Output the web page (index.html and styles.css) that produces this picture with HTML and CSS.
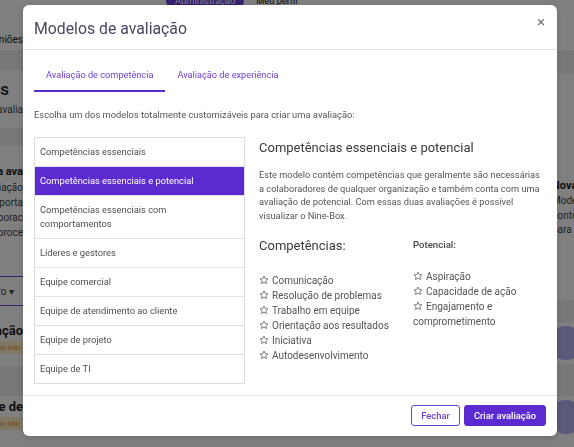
FILE: index.html
```html
<!DOCTYPE html>
<html lang="pt-BR">
<head>
<meta charset="utf-8">
<title>Modelos de avaliação</title>
<link rel="stylesheet" href="styles.css">
</head>
<body>
<div class="page">
  <header class="topbar">
    <div class="navpills">
      <span class="pill">Administração</span>
      <span class="navlink">Meu perfil</span>
    </div>
    <div class="subnav">
      <div class="clip-left"><span class="subnav-item">Reuniões</span></div>
    </div>
  </header>
  <div class="columns">
    <div class="col-left">
      <div class="band"></div>
      <div class="blk blk-title"><div class="clip clip-pad"><span class="big">Avaliações</span></div><div class="clip"><span class="small">Minhas avalia</span></div></div>
      <div class="band"></div>
      <div class="blk blk-card">
        <div class="clip"><span class="bold11">Nova ava</span></div>
        <div class="clip"><span class="small">Modelos de avaliação</span></div>
        <div class="clip"><span class="small">mais importa</span></div>
        <div class="clip"><span class="small">dos colaborac</span></div>
        <div class="clip"><span class="small">o proce</span></div>
      </div>
      <div class="blk blk-select"><div class="clip clip-pad2"><span class="small">Filtro ▾</span></div></div>
      <div class="blk blk-item">
        <div class="clip"><span class="bold13">Avaliação</span></div>
        <div class="clip"><span class="badge">Não inic</span></div>
      </div>
      <div class="band band-tall"></div>
      <div class="blk blk-item">
        <div class="clip"><span class="bold13">Equipe de</span></div>
        <div class="clip"><span class="badge">Não inic</span></div>
      </div>
    </div>
    <div class="col-mid"></div>
    <div class="col-right">
      <div class="rband"></div>
      <div class="rblk rblk-card">
        <span class="bold11">Nova ava</span>
        <span class="small">Modelos de</span>
        <span class="small">pontos</span>
        <span class="small">para se</span>
      </div>
      <div class="rband2"></div>
      <div class="rblk rblk-icon"><span class="circle"></span></div>
      <div class="rband3"></div>
      <div class="rblk rblk-icon"><span class="circle"></span></div>
    </div>
  </div>
</div>

<div class="overlay">
  <div class="modal">
    <div class="modal-header">
      <h1 class="modal-title">Modelos de avaliação</h1>
      <span class="close">×</span>
    </div>
    <div class="modal-body">
      <div class="tabs">
        <span class="tab active">Avaliação de competência</span>
        <span class="tab">Avaliação de experiência</span>
      </div>
      <p class="intro">Escolha um dos modelos totalmente customizáveis para criar uma avaliação:</p>
      <div class="content">
        <ul class="models">
          <li>Competências essenciais</li>
          <li class="selected">Competências essenciais e potencial</li>
          <li>Competências essenciais com comportamentos</li>
          <li>Líderes e gestores</li>
          <li>Equipe comercial</li>
          <li>Equipe de atendimento ao cliente</li>
          <li>Equipe de projeto</li>
          <li>Equipe de TI</li>
        </ul>
        <div class="detail">
          <h2 class="detail-title">Competências essenciais e potencial</h2>
          <p class="desc">Este modelo contém competências que geralmente são necessárias a colaboradores de qualquer organização e também conta com uma avaliação de potencial. Com essas duas avaliações é possível visualizar o Nine-Box.</p>
          <div class="lists">
            <div class="comp">
              <h3 class="comp-title">Competências:</h3>
              <ul class="stars">
                <li><svg class="star" viewBox="0 0 24 24"><polygon points="12 2.5 14.9 8.6 21.5 9.4 16.6 13.9 17.9 20.5 12 17.2 6.1 20.5 7.4 13.9 2.5 9.4 9.1 8.6"/></svg>Comunicação</li>
                <li><svg class="star" viewBox="0 0 24 24"><polygon points="12 2.5 14.9 8.6 21.5 9.4 16.6 13.9 17.9 20.5 12 17.2 6.1 20.5 7.4 13.9 2.5 9.4 9.1 8.6"/></svg>Resolução de problemas</li>
                <li><svg class="star" viewBox="0 0 24 24"><polygon points="12 2.5 14.9 8.6 21.5 9.4 16.6 13.9 17.9 20.5 12 17.2 6.1 20.5 7.4 13.9 2.5 9.4 9.1 8.6"/></svg>Trabalho em equipe</li>
                <li><svg class="star" viewBox="0 0 24 24"><polygon points="12 2.5 14.9 8.6 21.5 9.4 16.6 13.9 17.9 20.5 12 17.2 6.1 20.5 7.4 13.9 2.5 9.4 9.1 8.6"/></svg>Orientação aos resultados</li>
                <li><svg class="star" viewBox="0 0 24 24"><polygon points="12 2.5 14.9 8.6 21.5 9.4 16.6 13.9 17.9 20.5 12 17.2 6.1 20.5 7.4 13.9 2.5 9.4 9.1 8.6"/></svg>Iniciativa</li>
                <li><svg class="star" viewBox="0 0 24 24"><polygon points="12 2.5 14.9 8.6 21.5 9.4 16.6 13.9 17.9 20.5 12 17.2 6.1 20.5 7.4 13.9 2.5 9.4 9.1 8.6"/></svg>Autodesenvolvimento</li>
              </ul>
            </div>
            <div class="pot">
              <h3 class="pot-title">Potencial:</h3>
              <ul class="stars">
                <li><svg class="star" viewBox="0 0 24 24"><polygon points="12 2.5 14.9 8.6 21.5 9.4 16.6 13.9 17.9 20.5 12 17.2 6.1 20.5 7.4 13.9 2.5 9.4 9.1 8.6"/></svg>Aspiração</li>
                <li><svg class="star" viewBox="0 0 24 24"><polygon points="12 2.5 14.9 8.6 21.5 9.4 16.6 13.9 17.9 20.5 12 17.2 6.1 20.5 7.4 13.9 2.5 9.4 9.1 8.6"/></svg>Capacidade de ação</li>
                <li><svg class="star" viewBox="0 0 24 24"><polygon points="12 2.5 14.9 8.6 21.5 9.4 16.6 13.9 17.9 20.5 12 17.2 6.1 20.5 7.4 13.9 2.5 9.4 9.1 8.6"/></svg>Engajamento e comprometimento</li>
              </ul>
            </div>
          </div>
        </div>
      </div>
    </div>
    <div class="modal-footer">
      <button class="btn btn-outline">Fechar</button>
      <button class="btn btn-primary">Criar avaliação</button>
    </div>
  </div>
</div>
</body>
</html>
```
FILE: styles.css
```css
* { box-sizing: border-box; }
html, body { margin: 0; padding: 0; }
body {
  width: 574px;
  height: 447px;
  overflow: hidden;
  font-family: Roboto, "Liberation Sans", sans-serif;
  background: #ffffff;
  color: #333;
}

/* ---------- background page ---------- */
.page { width: 574px; height: 447px; display: flex; flex-direction: column; background: #fff; }
.topbar { height: 52px; display: flex; flex-direction: column; border-bottom: 1px solid #e6e6e6; }
.navpills { display: flex; gap: 12px; padding-left: 166px; margin-top: -9px; height: 18px; align-items: center; }
.pill { background: #6d3fe0; color: #fff; font-size: 9.3px; padding: 3px 9px; border-radius: 10px; }
.navlink { font-size: 9.3px; color: #222; }
.subnav { display: flex; margin-top: 25px; }
.clip-left, .clip { width: 23px; overflow: hidden; display: flex; justify-content: flex-end; white-space: nowrap; }
.clip-pad { padding-right: 14px; }
.clip-pad2 { padding-right: 9px; }
.subnav-item { font-size: 10px; color: #222; }
.columns { flex: 1; display: flex; }
.col-left { width: 23px; display: flex; flex-direction: column; }
.col-mid { flex: 1; }
.col-right { width: 17px; display: flex; flex-direction: column; overflow: hidden; }
.band { height: 18px; background: #eeeeef; flex: none; }
.band-tall { height: 30px; }
.blk { background: #fff; display: flex; flex-direction: column; flex: none; }
.blk-title { height: 58px; padding-top: 9px; gap: 3px; }
.big { font-size: 17px; color: #222; font-weight: 500; line-height: 20px; }
.small { font-size: 10px; color: #444; line-height: 15px; }
.bold11 { font-size: 11px; font-weight: 700; color: #222; line-height: 16px; }
.bold13 { font-size: 13px; font-weight: 700; color: #222; line-height: 17px; }
.blk-card { height: 104px; padding-top: 18px; }
.blk-select { height: 30px; justify-content: center; border-top: 1px solid #6d3fe0; border-bottom: 1px solid #6d3fe0; margin: 26px 0 14px; }
.blk-item { height: 46px; gap: 2px; padding-top: 2px; }
.badge { background: #fff1c9; color: #d98b1a; font-size: 8px; padding: 1px 3px; line-height: 11px; }
.rband { height: 22px; background: #eeeeef; flex: none; }
.rblk { background: #fff; display: flex; flex-direction: column; flex: none; }
.rblk-card { height: 226px; padding-top: 104px; margin-left: -5px; white-space: nowrap; }
.rblk-card .small { line-height: 14.5px; }
.rband2 { height: 22px; background: #eeeeef; flex: none; }
.rblk-icon { height: 42px; justify-content: center; }
.rband3 { height: 32px; background: #eeeeef; flex: none; }
.circle { width: 34px; height: 34px; border-radius: 50%; background: #b6b2f0; margin-left: -8px; }

/* ---------- overlay & modal ---------- */
.overlay {
  position: fixed;
  inset: 0;
  background: rgba(0, 0, 0, 0.5);
  padding: 5px 0 0 23px;
}
.modal {
  width: 534px;
  background: #fff;
  border-radius: 6px;
  display: flex;
  flex-direction: column;
  box-shadow: 0 2px 6px rgba(0,0,0,0.15);
}
.modal-header {
  height: 45px;
  display: flex;
  align-items: center;
  justify-content: space-between;
  padding: 0 12px 0 11px;
  border-bottom: 1px solid #e2e2ea;
}
.modal-title {
  margin: 0;
  font-size: 15.8px;
  font-weight: 400;
  color: #474761;
  padding-top: 2px;
}
.close { font-size: 15px; color: #777; line-height: 1; margin-top: -10px; }

.modal-body { padding: 10px 11px 11px; }
.tabs { display: flex; }
.tab {
  font-size: 9.2px;
  line-height: 14px;
  color: #6b3fd6;
  padding: 8px 12px 8px;
  border-bottom: 2px solid transparent;
}
.tab.active { border-bottom-color: #5b2bd1; }
.intro { margin: 16px 0 15px; font-size: 9.35px; line-height: 14px; color: #555; }

.content { display: flex; gap: 14px; }
.models {
  list-style: none;
  margin: 0;
  padding: 0;
  width: 211px;
  flex: none;
  border: 1px solid #dcdcdc;
}
.models li {
  font-size: 9.3px;
  line-height: 14px;
  color: #4e4e4e;
  padding: 7px 5px;
  border-bottom: 1px solid #e2e2e2;
}
.models li:last-child { border-bottom: none; }
.models li.selected { background: #5b2bd1; color: #fff; }

.detail { flex: 1; }
.detail-title { margin: 2px 0 0; font-size: 13px; font-weight: 400; line-height: 18px; color: #3a3a3a; }
.desc { margin: 11px 0 0; font-size: 9.25px; line-height: 13.6px; color: #555; }
.lists { display: flex; margin-top: 15px; }
.comp { width: 154px; }
.pot { width: 116px; }
.comp-title { margin: 0; font-size: 13px; font-weight: 400; line-height: 18px; color: #3a3a3a; }
.pot-title { margin: 0; font-size: 9.6px; font-weight: 500; line-height: 16px; color: #444; }
.stars { list-style: none; margin: 0; padding: 0; }
.comp .stars { margin-top: 18px; }
.pot .stars { margin-top: 16px; }
.stars li { font-size: 10px; line-height: 15px; color: #555; }
.star { width: 10px; height: 10px; margin-right: 3px; vertical-align: -1px; fill: none; stroke: #555; stroke-width: 1.8; stroke-linejoin: round; }

.modal-footer {
  border-top: 1px solid #e2e2ea;
  padding: 9px 11px 10px;
  display: flex;
  justify-content: flex-end;
  gap: 4px;
}
.btn {
  font-family: Roboto, "Liberation Sans", sans-serif;
  font-size: 9.4px;
  font-weight: 500;
  height: 21px;
  border-radius: 3px;
  padding: 0;
  white-space: nowrap;
  cursor: pointer;
}
.btn-outline { background: #fff; color: #6b3fd6; border: 1px solid #6b3fd6; width: 49px; }
.btn-primary { background: #5b2bd1; color: #fff; border: 1px solid #5b2bd1; width: 82px; }
```
